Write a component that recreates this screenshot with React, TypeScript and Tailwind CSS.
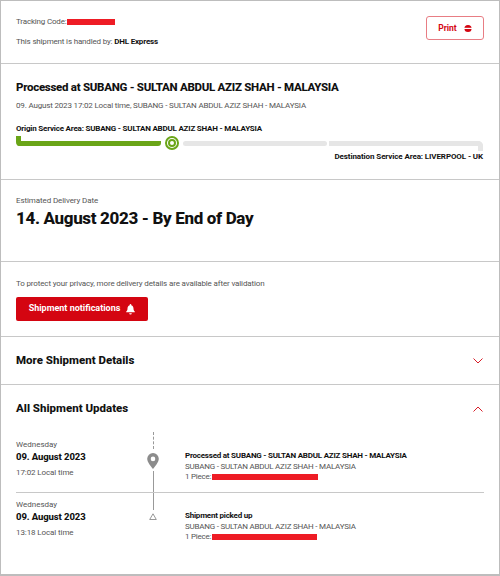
const FONT = "font-['Roboto',sans-serif]";

const Redacted = ({ className }: { className: string }) => (
    <span className={`inline-block h-[6px] bg-[#ee1c25] ${className}`} />
);

const PrintIcon = () => (
    <svg width="8" height="9" viewBox="0 0 8 9" fill="#d40511">
        <circle cx="4" cy="4.5" r="3.6" />
        <rect x="0" y="3.8" width="8" height="1.2" fill="#fff" />
    </svg>
);

const BellIcon = () => (
    <svg width="9" height="11" viewBox="0 0 9 11" fill="#fff">
        <path d="M4.5 0a.8.8 0 0 1 .8.8v.5c1.500.4 2.200 1.700 2.200 3.200 0 1.600.4 2.300 1.300 3.100v.6H.200v-.6C1.100 6.800 1.500 6.100 1.500 4.500c0-1.500.7-2.800 2.200-3.200V.8A.8.8 0 0 1 4.500 0z" />
        <path d="M3.200 9.200h2.600a1.300 1.300 0 0 1-2.600 0z" />
    </svg>
);

const Chevron = ({ up }: { up?: boolean }) => (
    <svg width="10" height="6" viewBox="0 0 10 6" fill="none" stroke="#d40511" strokeWidth="0.9">
        <path d={up ? "M0.500 5.500L5 1l4.500 4.500" : "M0.500 0.500L5 5l4.500-4.500"} />
    </svg>
);

const PinIcon = () => (
    <svg width="12" height="16" viewBox="0 0 12 16" fill="#8c8c8c">
        <path fillRule="evenodd" d="M6 0a5.800 5.800 0 0 1 5.800 5.800C11.800 9.300 8 13.500 6 16 4 13.500.2 9.300.2 5.800A5.800 5.800 0 0 1 6 0zm0 3.600a2.300 2.300 0 1 0 0 4.600 2.300 2.300 0 0 0 0-4.600z" />
    </svg>
);

const TriangleIcon = () => (
    <svg width="8" height="7" viewBox="0 0 8 7" fill="none" stroke="#8c8c8c" strokeWidth="0.9">
        <path d="M4 0.800L7.300 6.500H0.700z" />
    </svg>
);

interface UpdateRowProps {
    time: string;
    title: string;
    redactClass: string;
    first?: boolean;
    marker: React.ReactNode;
}

const UpdateRow = ({ time, title, redactClass, first, marker }: UpdateRowProps) => (
    <div className={`flex ${first ? "h-[61px] border-b border-[#c8c8c8]" : "h-[60px]"}`}>
        <div className={`w-[121px] ${first ? "pt-[8px]" : "pt-[7px]"}`}>
            <div className="text-[8px] leading-[10px] text-[#555]">Wednesday</div>
            <div className="text-[9.500px] leading-[13px] font-extrabold tracking-[-0.1px] text-[#111]">09. August 2023</div>
            <div className="mt-[5px] text-[8px] leading-[10px] tracking-[-0.1px] text-[#555]">{time}</div>
        </div>
        <div className="w-[32px] shrink-0 flex justify-center">{marker}</div>
        <div className={`ml-[16px] text-[8px] leading-[10.500px] tracking-[-0.22px] text-[#555] ${first ? "pt-[19px]" : "pt-[18px]"}`}>
            <div className="font-bold text-[#111]">{title}</div>
            <div>SUBANG - SULTAN ABDUL AZIZ SHAH - MALAYSIA</div>
            <div className="flex items-center gap-[1px]">1 Piece: <Redacted className={redactClass} /></div>
        </div>
    </div>
);

export default function App() {
    return (
        <div className={`${FONT} w-[500px] h-[576px] bg-white border border-[#bdbdbd] border-b-2 overflow-hidden`}>
            <div className="h-[63px] px-[15px] pt-[15px] flex items-start justify-between border-b border-[#c8c8c8]">
                <div className="mt-[1px] text-[8px] tracking-[-0.17px] text-[#555]">
                    <div className="flex items-center h-[10px]">Tracking Code:<Redacted className="w-[48px]" /></div>
                    <div className="mt-[9px] h-[10px]">This shipment is handled by: <span className="font-bold text-[#111]">DHL Express</span></div>
                </div>
                <button className="w-[58px] h-[24px] rounded-[3px] border border-[#e87d84] flex items-center justify-center gap-[7px] text-[8.500px] font-bold text-[#d40511]">
                    Print <PrintIcon />
                </button>
            </div>

            <div className="h-[116px] px-[15px] pt-[16px] border-b border-[#c8c8c8]">
                <h1 className="text-[11.500px] leading-[14px] font-extrabold tracking-[-0.28px] text-[#111]">Processed at SUBANG - SULTAN ABDUL AZIZ SHAH - MALAYSIA</h1>
                <p className="mt-[7px] text-[8px] leading-[10px] tracking-[-0.17px] text-[#555]">09. August 2023 17:02 Local time, SUBANG - SULTAN ABDUL AZIZ SHAH - MALAYSIA</p>
                <p className="mt-[13px] text-[8px] leading-[10px] font-bold tracking-[-0.2px] text-[#111]">Origin Service Area: SUBANG - SULTAN ABDUL AZIZ SHAH - MALAYSIA</p>
                <div className="mt-[1px] mr-[1px] flex items-start h-[16px]">
                    <div className="mt-[1px] w-[145px] h-[10px] border-l-[5px] border-b-[5px] border-[#6aa518] rounded-bl-[4px] rounded-r-[3px]" />
                    <div className="mt-[1px] ml-[4px] w-[14px] h-[14px] rounded-full border-[2px] border-[#6aa518] p-[1px]">
                        <div className="w-full h-full rounded-full border-[2px] border-[#6aa518]" />
                    </div>
                    <div className="ml-[4px] mt-[6px] w-[144px] h-[5px] rounded-[3px] bg-[#e6e6e6]" />
                    <div className="ml-[2px] mt-[6px] flex-1 h-[10px] border-r-[5px] border-t-[5px] border-[#e6e6e6] rounded-tr-[5px]" />
                </div>
                <p className="mt-[1px] mr-[1px] text-right text-[8px] leading-[10px] font-bold tracking-[-0.1px] text-[#111]">Destination Service Area: LIVERPOOL - UK</p>
            </div>

            <div className="h-[82px] px-[15px] pt-[16px] border-b border-[#c8c8c8]">
                <p className="text-[8px] leading-[10px] tracking-[-0.1px] text-[#555]">Estimated Delivery Date</p>
                <p className="mt-[2px] text-[17px] leading-[20px] font-extrabold tracking-[-0.35px] text-[#111]">14. August 2023 - By End of Day</p>
            </div>

            <div className="h-[75px] px-[15px] pt-[17px] border-b border-[#c8c8c8]">
                <p className="text-[8px] leading-[10px] tracking-[-0.14px] text-[#555]">To protect your privacy, more delivery details are available after validation</p>
                <button className="mt-[8px] w-[132px] h-[24px] rounded-[2px] bg-[#d40511] flex items-center justify-center gap-[6px] text-[9px] font-bold text-white">
                    Shipment notifications <BellIcon />
                </button>
            </div>

            <div className="h-[48px] px-[15px] flex items-center justify-between border-b border-[#c8c8c8]">
                <h2 className="text-[11.500px] font-extrabold text-[#111]">More Shipment Details</h2>
                <span className="mr-[1px] flex"><Chevron /></span>
            </div>

            <div className="px-[15px] pt-[17px]">
                <div className="flex items-center justify-between h-[14px]">
                    <h2 className="text-[11.500px] font-extrabold text-[#111]">All Shipment Updates</h2>
                    <span className="mr-[1px] flex"><Chevron up /></span>
                </div>
                <div className="mt-[16px]">
                    <UpdateRow
                        time="17:02 Local time"
                        title="Processed at SUBANG - SULTAN ABDUL AZIZ SHAH - MALAYSIA"
                        redactClass="w-[106px]"
                        first
                        marker={
                            <div className="flex flex-col items-center">
                                <div className="h-[17px] border-l border-dashed border-[#999]" />
                                <div className="mt-[4px] flex"><PinIcon /></div>
                                <div className="mt-[2px] h-[22px] border-l border-[#999]" />
                            </div>
                        }
                    />
                    <UpdateRow
                        time="13:18 Local time"
                        title="Shipment picked up"
                        redactClass="w-[105px]"
                        marker={
                            <div className="flex flex-col items-center">
                                <div className="h-[17px] border-l border-[#999]" />
                                <div className="mt-[3px] flex"><TriangleIcon /></div>
                            </div>
                        }
                    />
                </div>
            </div>
        </div>
    );
}
